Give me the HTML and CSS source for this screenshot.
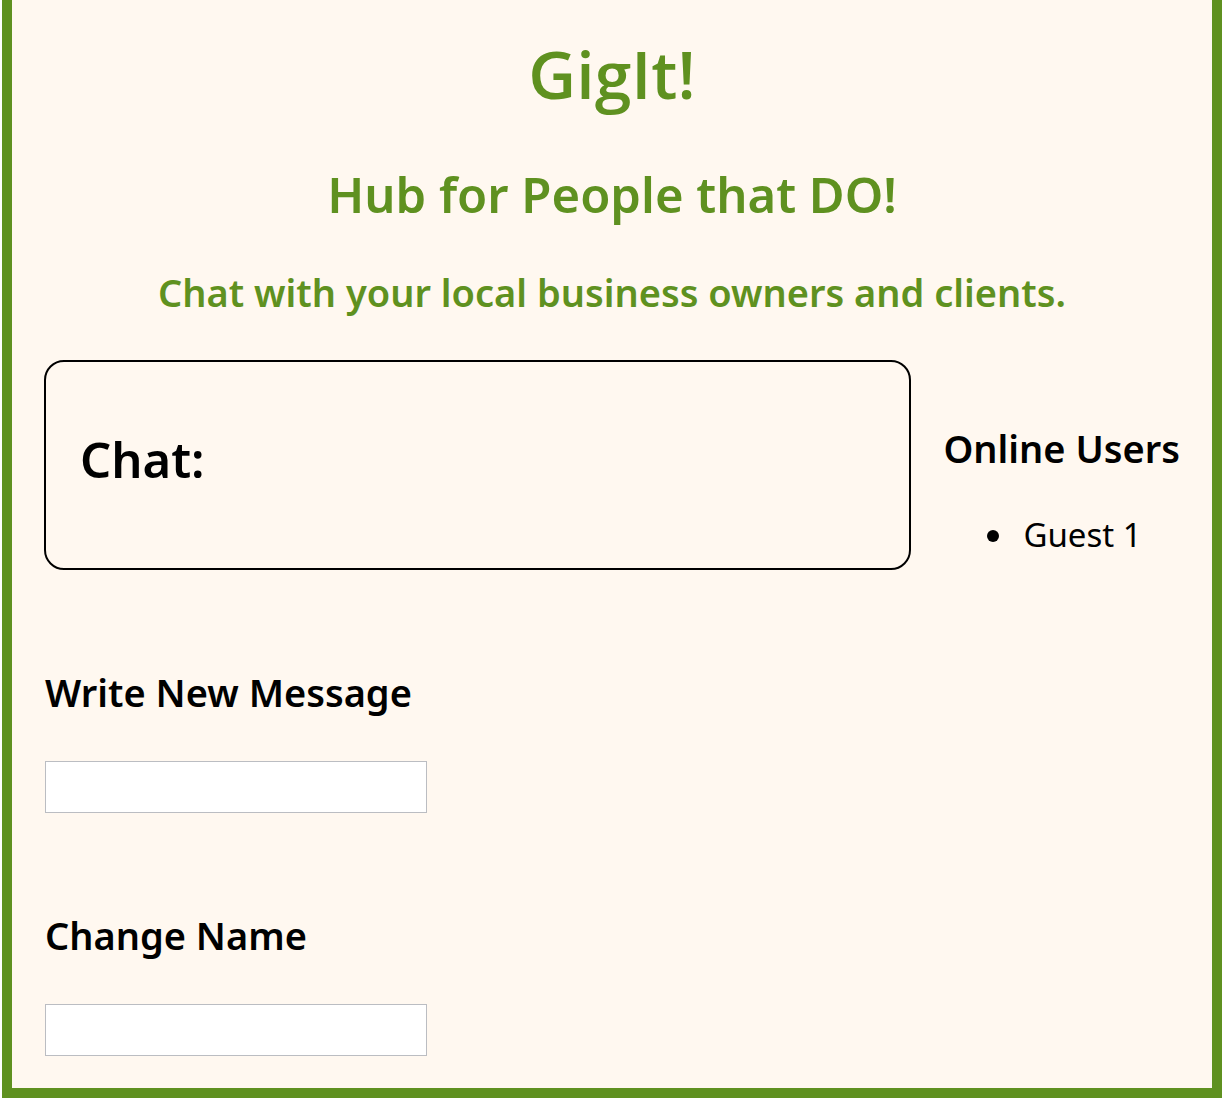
FILE: index.html
```html
<!DOCTYPE html>
<html lang="en">
<head>
<meta charset="utf-8">
<meta name="viewport" content="width=device-width, initial-scale=1">
<title>GigIt!</title>
<link rel="stylesheet" href="styles.css">
</head>
<body>
<div class="page">
  <header class="intro">
    <h1 class="title">GigIt!</h1>
    <h2 class="subtitle">Hub for People that DO!</h2>
    <h3 class="tagline">Chat with your local business owners and clients.</h3>
  </header>
  <main>
    <div class="room">
      <section class="chat">
        <h2 class="chat-title">Chat:</h2>
      </section>
      <aside class="users">
        <h3 class="users-title">Online Users</h3>
        <ul class="user-list">
          <li>Guest 1</li>
        </ul>
      </aside>
    </div>
    <form class="field">
      <label class="label" for="message">Write New Message</label>
      <input class="input" id="message" type="text">
    </form>
    <form class="field">
      <label class="label" for="name">Change Name</label>
      <input class="input" id="name" type="text">
    </form>
  </main>
</div>
</body>
</html>
```

FILE: styles.css
```css
* {
  box-sizing: border-box;
}

body {
  margin: 0 2px;
  background: #fff;
  color: #000;
  font-family: "Noto Sans", sans-serif;
  font-size: 33px;
  line-height: 40px;
}

h1, h2, h3 {
  margin: 0;
  font-weight: 600;
}

.page {
  padding: 33px 32px 32px;
  border: 10px solid #5f9120;
  border-top: 0;
  background: #fff8f0;
}

.intro {
  color: #5f9120;
  text-align: center;
}

.title {
  margin-bottom: 51px;
  font-family: "Open Sans", "Noto Sans", sans-serif;
  font-size: 66px;
  line-height: 80px;
}

.subtitle,
.chat-title {
  font-size: 49px;
  line-height: 60px;
}

.subtitle {
  margin-bottom: 44px;
}

.tagline,
.users-title,
.label {
  font-size: 38px;
  font-weight: 600;
  line-height: 48px;
}

.room {
  display: grid;
  grid-template-columns: 1fr auto;
  gap: 32px;
  margin-top: 44px;
}

.chat {
  padding: 67px 34px 79px;
  border: 2px solid #000;
  border-radius: 20px;
}

.users {
  padding-top: 64px;
}

.user-list {
  margin: 43px 0 0;
  padding-left: 74px;
}

.user-list li {
  padding-left: 6px;
}

.field {
  display: flex;
  flex-direction: column;
  align-items: flex-start;
  gap: 45px;
  margin: 98px 0 0 1px;
}

.input {
  width: 382px;
  max-width: 100%;
  height: 52px;
  padding: 4px 8px;
  border: 1px solid #bbbdc2;
  background: #fff;
  font: inherit;
}
```
